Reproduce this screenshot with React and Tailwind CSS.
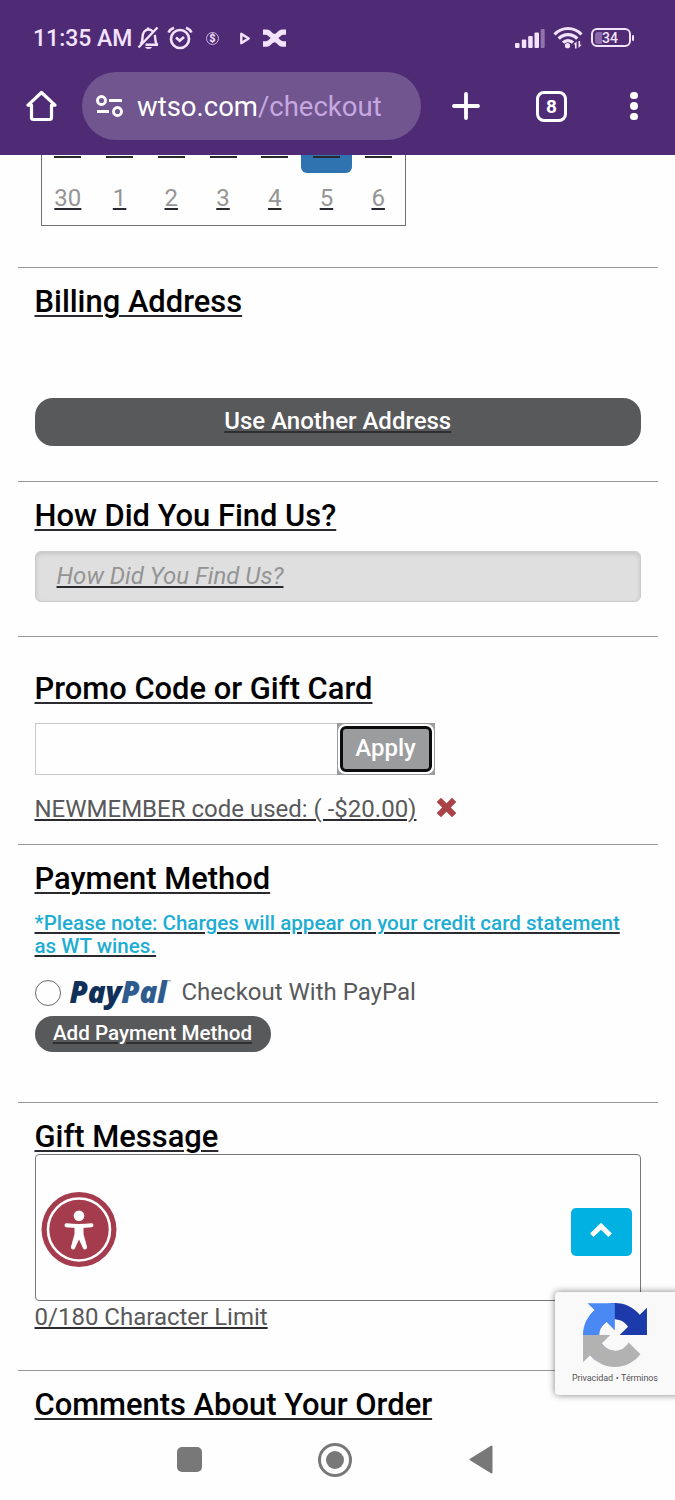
import React, { useState } from 'react';

const lastWeek = ['30', '1', '2', '3', '4', '5', '6'];

// Phone status bar
function StatusBar() {
    return (
        <div className="flex h-[72px] items-center pt-[5px] pl-[33px] text-[#f3e2fb]">
            <span className="w-[104px] whitespace-nowrap pt-px text-[23px] leading-8 font-medium">11:35 AM</span>
            <svg className="mb-[2px] h-6 w-[23px]" viewBox="0 0 23 24" fill="none" stroke="currentColor" strokeWidth="2.400">
                <path d="M8.500 18.700H21M3.500 18c1.600-1.600 2-3.500 2-6.500 0-5 2.500-8 6-8 1.700 0 3 .6 4 1.700M17.700 9c.4 1 .5 2 .5 3 0 3.500.2 5 2.300 7M1.500 21.500L20.500 1.500M11 1.500v2.500" />
                <path d="M8 21h7c-.8 2.600-6.200 2.600-7 0z" fill="currentColor" stroke="none" />
            </svg>
            <svg className="mb-[2px] ml-[7px] h-6 w-[26px]" viewBox="0 0 26 24" fill="none" stroke="currentColor" strokeWidth="2.700">
                <circle cx="13" cy="13" r="9" />
                <path d="M1.500 6.500C2.500 4.500 4.500 2.600 7 1.700M24.500 6.500c-1-2-3-3.900-5.500-4.800M9 11.500l3.700 3.300 4.300-3.800" />
            </svg>
            <span className="mb-px ml-[13px] flex size-[13px] items-center justify-center rounded-full border border-[#cdb4de] text-[11px] leading-none font-extrabold">$</span>
            <svg className="mb-px ml-5 h-[13px] w-3" viewBox="0 0 12 14" fill="none" stroke="currentColor" strokeWidth="2.600" strokeLinejoin="round">
                <path d="M2 2v10L10 7z" />
            </svg>
            <svg className="mb-px ml-[12px] h-[18px] w-[23px]" viewBox="0 0 24 18" fill="currentColor">
                <path d="M0 0h4c4 0 5.500 4.500 8 4.500S16 0 20 0h4v5.500h-2.500c-2.500 0-3.500 2-5.500 3.500 2 1.500 3 3.500 5.500 3.500H24V18h-4c-4 0-5.500-4.500-8-4.500S8 18 4 18H0v-5.500h2.500c2.500 0 3.500-2 5.500-3.500-2-1.500-3-3.500-5.500-3.500H0z" />
            </svg>
            <svg className="mb-px ml-[229px] h-5 w-[30px]" viewBox="0 0 30 20" fill="currentColor">
                <rect x="0" y="15" width="4.500" height="5" rx="1" />
                <rect x="6.800" y="11.500" width="4.500" height="8.500" rx="1" />
                <rect x="13.200" y="8" width="4.500" height="12" rx="1" />
                <rect x="19.500" y="4.500" width="4.500" height="15.500" rx="1" />
                <rect x="25.700" y="1" width="4" height="19" rx="1" opacity=".4" />
            </svg>
            <svg className="mb-[2px] ml-2 h-[23px] w-[30px]" viewBox="0 0 30 23" fill="none" stroke="currentColor" strokeWidth="3.200">
                <path d="M1.500 8.500c7.500-8 19.500-8 27 0M5.700 12.700c5-5.400 13.600-5.400 18.600 0M10 16.700c2.800-2.900 7.200-2.900 10 0" />
                <circle cx="14.500" cy="19.700" r="2.600" fill="currentColor" stroke="none" />
                <path d="M20.300 18.500l3.300-3v7h-1.600v-4zM28.800 18.800l-3.300 3.200v-7h1.600v3.800z" fill="currentColor" stroke="none" />
            </svg>
            <span className="mb-[2px] ml-2 flex h-[19px] w-10 items-center rounded-[6px] border-2 border-current">
                <span className="ml-[2px] h-[12px] w-[7px] rounded-l-[3px] bg-[#8a68aa]" />
                <span className="text-[14px] leading-none font-medium">34</span>
            </span>
            <span className="mb-[2px] ml-px h-[6px] w-[2px] rounded-sm bg-current" />
        </div>
    );
}

// Browser toolbar with the address field
function Toolbar() {
    return (
        <div className="flex h-[68px] items-center pl-[26px] text-white">
            <svg className="h-8 w-[31px]" viewBox="0 0 31 32" fill="none" stroke="currentColor" strokeWidth="3.200" strokeLinejoin="round">
                <path d="M15.500 2.500L2 15.200h3.500v12.300q0 2 2 2h16q2 0 2-2V15.200H29z" />
            </svg>
            <div className="ml-[25px] flex h-[68px] w-[339px] items-center rounded-full bg-[#71558f] pl-[14px]">
                <svg className="h-[22px] w-[27px]" viewBox="0 0 27 22" fill="none" stroke="currentColor" strokeWidth="2.900">
                    <circle cx="5.500" cy="5.500" r="4" />
                    <circle cx="21.500" cy="16.500" r="4" />
                    <path d="M13 5.500h13M1 16.500h12" />
                </svg>
                <span className="mt-[2px] ml-[14px] whitespace-nowrap text-[27.5px] text-white">
                    wtso.com<span className="text-[#c6a8e0]">/checkout</span>
                </span>
            </div>
            <svg className="ml-[31px] size-7" viewBox="0 0 28 28" stroke="currentColor" strokeWidth="3.800" strokeLinecap="round">
                <path d="M14 2v24M2 14h24" />
            </svg>
            <span className="ml-[56px] flex size-[31px] items-center justify-center rounded-[8px] border-[3px] border-white text-[19px] leading-none font-bold">8</span>
            <span className="ml-[63px] flex flex-col gap-[3px]">
                <span className="size-[7.5px] rounded-full bg-white" />
                <span className="size-[7.5px] rounded-full bg-white" />
                <span className="size-[7.5px] rounded-full bg-white" />
            </span>
        </div>
    );
}

// Visible end of the delivery date picker
function Calendar() {
    return (
        <div className="ml-[41px] h-[71px] w-[365px] border border-t-0 border-[#6f6f6f]">
            <div className="flex h-[18px] pr-px">
                {lastWeek.map((day) => (
                    <div key={day} className={day === '5' ? 'flex-1 rounded-b-[6px] bg-[#3073b1]' : 'flex-1'}>
                        <div className="mx-auto mt-px h-[2px] w-[27px] bg-[#29292d]" />
                    </div>
                ))}
            </div>
            <div className="flex pt-[9px] pr-px text-center text-[24px] leading-8 text-[#959595]">
                {lastWeek.map((day) => (
                    <span key={day} className="flex-1 underline decoration-[#29292d] decoration-2 underline-offset-[2px]">{day}</span>
                ))}
            </div>
        </div>
    );
}

function Section({ title, className, children }) {
    return (
        <section className={`mr-[17px] ml-[17.5px] border-t border-[#979797] px-[17px] ${className}`}>
            <h2 className="whitespace-nowrap text-[30.9px] leading-10 font-medium text-black underline decoration-[#2b2b2f] decoration-2 underline-offset-[3px]">
                {title}
            </h2>
            {children}
        </section>
    );
}

function PayPalLogo() {
    return (
        <span className="ml-[9px] flex h-[27px] w-[112px] items-center pb-[3px] whitespace-nowrap font-['Open_Sans'] text-[29.5px] leading-[27px] font-extrabold tracking-[-0.2px] italic">
            <span className="text-[#10305a]">Pay</span>
            <span className="text-[#2f5c8f]">Pal</span>
            <span className="mb-[18px] ml-px font-['Roboto'] text-[6px] leading-none font-normal tracking-normal text-[#444] not-italic">™</span>
        </span>
    );
}

function RecaptchaBadge() {
    return (
        <div className="absolute top-[1292px] left-[555px] flex h-[103px] w-[125px] flex-col rounded-[4px] bg-[#f9f9f9] pt-[11px] shadow-[0_0_7px_rgba(0,0,0,0.5)]">
            <svg className="ml-7 size-16" viewBox="0 0 64 64">
                <path fill="#1c3aa9" d="M64 31.955l-.033-1.370V4.687l-7.160 7.160C50.948 4.674 42.033.093 32.050.093c-10.400 0-19.622 4.960-25.458 12.640l11.736 11.860a15.550 15.550 0 0 1 4.754-5.334c2.050-1.600 4.952-2.906 8.968-2.906.485 0 .86.057 1.135.163 4.976.393 9.288 3.140 11.828 7.124l-8.307 8.307L64 31.953" />
                <path fill="#4a89f3" d="M31.862.094l-1.370.033H4.594l7.160 7.160C4.580 13.147 0 22.060 0 32.046c0 10.400 4.960 19.622 12.640 25.458L24.500 45.768a15.550 15.550 0 0 1-5.334-4.754c-1.600-2.050-2.906-4.952-2.906-8.968 0-.485.057-.86.163-1.135.393-4.976 3.140-9.288 7.124-11.828l8.307 8.307L31.860.095" />
                <path fill="#b2b2b2" d="M.001 32.045l.033 1.370v25.898l7.160-7.160c5.860 7.173 14.774 11.754 24.760 11.754 10.400 0 19.622-4.960 25.458-12.640l-11.736-11.860a15.550 15.550 0 0 1-4.754 5.334c-2.050 1.600-4.952 2.906-8.968 2.906-.485 0-.86-.057-1.135-.163-4.976-.393-9.288-3.140-11.828-7.124l8.307-8.307c-10.522.04-22.400.066-27.295-.005" />
            </svg>
            <span className="mt-1 ml-[17px] whitespace-nowrap text-[9px] leading-[14px] tracking-[-0.1px] text-[#555]">
                Privacidad <span className="mx-[0.5px]">•</span> Términos
            </span>
        </div>
    );
}

function NavigationBar() {
    return (
        <div className="flex h-[75px] items-center pl-[177px] text-[#787878]">
            <span className="size-[25px] rounded-[5px] bg-current" />
            <span className="ml-[116px] flex size-[34px] items-center justify-center rounded-full border-[3px] border-current">
                <span className="size-[18px] rounded-full bg-current" />
            </span>
            <svg className="ml-[117px] h-[29px] w-6" viewBox="0 0 24 29" fill="currentColor" stroke="currentColor" strokeWidth="2" strokeLinejoin="round">
                <path d="M1.500 14.500L22.500 1.500v26z" />
            </svg>
        </div>
    );
}

export default function App() {
    const [promo, setPromo] = useState('');
    const [message, setMessage] = useState('');

    return (
        <div className="relative h-[1500px] w-[675px] overflow-hidden bg-[#fefefe] font-['Roboto',sans-serif] text-[#58595b]">
            <header className="h-[155px] bg-[#4f2a75]">
                <StatusBar />
                <Toolbar />
            </header>

            <main className="h-[1267px]">
                <Calendar />

                {/* Billing Address */}
                <Section title="Billing Address" className="mt-[41px] h-[214px] pt-[14px]">
                    <button className="mt-[76px] block h-12 w-full rounded-[18px] bg-[#58595b] pb-[3px] text-[24px] leading-8 font-medium text-white underline decoration-[#2f2f31] decoration-2 underline-offset-[2px]">
                        Use Another Address
                    </button>
                </Section>

                {/* Referral */}
                <Section title="How Did You Find Us?" className="h-[155px] pt-[14px]">
                    <div className="mt-[15px] flex h-[51px] items-center rounded-[6px] border border-[#cbcbcb] bg-[#dfdfdf] pb-[2px] pl-[21px] text-[24px] text-[#949494] italic shadow-[inset_0_2px_4px_rgba(0,0,0,0.12)]">
                        <span className="underline decoration-[#29292d] decoration-2 underline-offset-[2px]">How Did You Find Us?</span>
                    </div>
                </Section>

                {/* Promo code */}
                <Section title="Promo Code or Gift Card" className="h-[208px] pt-8">
                    <div className="mt-[14px] flex h-[52px]">
                        <input
                            value={promo}
                            onChange={(e) => setPromo(e.target.value)}
                            className="w-[302px] border border-r-0 border-[#c9c9c9] px-3 text-[24px] outline-none"
                        />
                        <div className="w-[98px] bg-[#9b9c9e] p-px">
                            <button className="flex size-full rounded-[7px] bg-white p-[2px]">
                                <span className="flex size-full items-center justify-center rounded-[6px] border-[3px] border-[#0c0c0e] bg-[#9b9c9e] pb-[2px] text-[24px] leading-8 font-medium text-white">
                                    Apply
                                </span>
                            </button>
                        </div>
                    </div>
                    <div className="mt-[18px] flex items-center text-[24px] leading-8">
                        <span className="whitespace-nowrap underline decoration-[#2b2b2f] decoration-2 underline-offset-[2px]">
                            NEWMEMBER code used: ( -$20.00)
                        </span>
                        <svg className="mb-[3px] ml-5 size-[21px]" viewBox="0 0 20 20" stroke="#a94347" strokeWidth="5.800" strokeLinejoin="round">
                            <path d="M2.700 2.700l14.600 14.600M17.300 2.700L2.700 17.300" />
                        </svg>
                    </div>
                </Section>

                {/* Payment */}
                <Section title="Payment Method" className="h-[258px] pt-[14px]">
                    <p className="mt-[13px] text-[20.6px] leading-[23px] font-medium whitespace-nowrap text-[#1eadd3] underline decoration-[#2b2b2f] decoration-2 underline-offset-[2px]">
                        *Please note: Charges will appear on your credit card statement
                        <br />
                        as WT wines.
                    </p>
                    <label className="mt-[21px] flex h-[27px] items-center text-[24px] leading-8">
                        <span className="size-[26px] rounded-full border-[1.5px] border-[#6a6a6a]" />
                        <PayPalLogo />
                        <span className="-mt-px whitespace-nowrap">Checkout With PayPal</span>
                    </label>
                    <button className="mt-[10px] block h-9 w-[236px] rounded-full bg-[#58595b] pb-px text-[20.6px] leading-[35px] font-medium text-white underline decoration-[#2f2f31] decoration-2 underline-offset-[2px]">
                        Add Payment Method
                    </button>
                </Section>

                {/* Gift message */}
                <Section title="Gift Message" className="h-[268px] pt-[14px]">
                    <textarea
                        value={message}
                        onChange={(e) => setMessage(e.target.value)}
                        className="-mt-[3px] block h-[147px] w-full resize-none rounded-[4px] border border-[#777] p-3 outline-none"
                    />
                    <p className="text-[24px] leading-8 underline decoration-[#2b2b2f] decoration-2 underline-offset-[2px]">
                        {message.length}/180 Character Limit
                    </p>
                </Section>

                <Section title="Comments About Your Order" className="pt-[14px]" />
            </main>

            <NavigationBar />

            {/* Accessibility widget */}
            <button className="absolute top-[1191px] left-[41px] size-[76px]">
                <svg className="size-full" viewBox="0 0 76 76">
                    <circle cx="38" cy="38.500" r="37.500" fill="#a43c4d" />
                    <circle cx="38" cy="38.500" r="31" fill="none" stroke="#fff" strokeWidth="2.600" />
                    <circle cx="38" cy="24.700" r="5.300" fill="#fff" />
                    <path d="M25.500 34.300q12.500 1.500 25 0" stroke="#fff" strokeWidth="4" strokeLinecap="round" fill="none" />
                    <path d="M33.500 35h9v8l3.500 12.800a2 2 0 0 1-4.200 1L38 48.500l-3.800 8.300a2 2 0 0 1-4.200-1L33.500 43z" fill="#fff" />
                </svg>
            </button>

            {/* Back to top */}
            <button className="absolute top-[1208px] left-[571px] flex h-12 w-[61px] items-center justify-center rounded-[5px] bg-[#00b1e2] pr-[2px] pb-[5px]">
                <svg className="h-4 w-[22px]" viewBox="0 0 22 16" fill="none" stroke="#fff" strokeWidth="5">
                    <path d="M1.800 13.300L11 4.200l9.200 9.100" />
                </svg>
            </button>

            <RecaptchaBadge />
        </div>
    );
}
